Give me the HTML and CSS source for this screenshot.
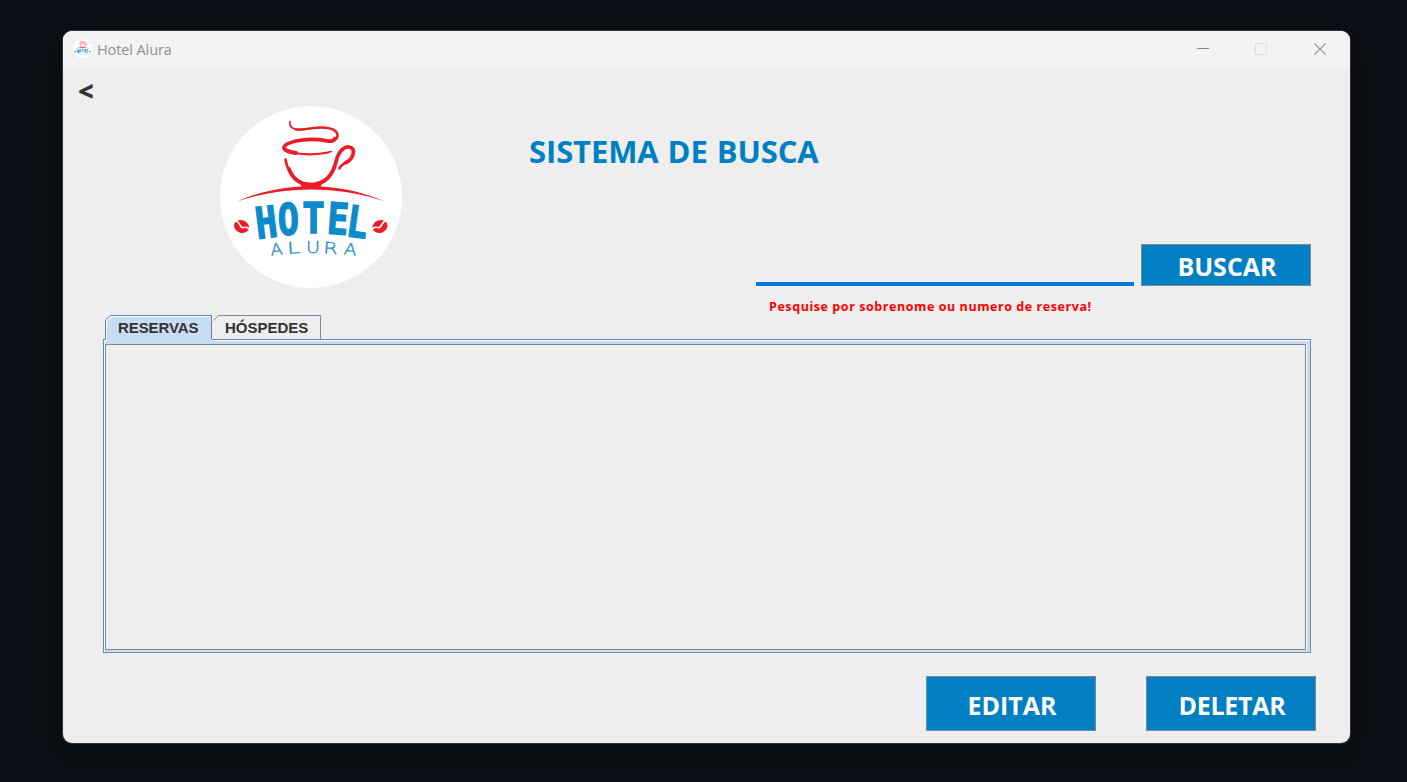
FILE: index.html
```html
<!DOCTYPE html>
<html lang="pt-BR">
<head>
<meta charset="utf-8">
<title>Hotel Alura</title>
<link rel="stylesheet" href="styles.css">
</head>
<body>
<main class="window">
  <header class="titlebar">
    <svg class="app-icon" viewBox="0 0 182 182"><use href="#logo"/></svg>
    <span class="app-name">Hotel Alura</span>
    <svg class="controls" viewBox="0 0 124 12">
      <path d="M0 5.5h12" stroke="#8b8b8b"/>
      <rect x="58.5" y=".5" width="11" height="11" rx="1" fill="none" stroke="#dedede"/>
      <path d="M117.3 .3l11.4 11.4M128.7 .3l-11.4 11.4" fill="none" stroke="#8b8b8b" stroke-width="1.1"/>
    </svg>
  </header>
  <section class="content">
    <div class="top">
      <div class="brand">
        <button class="back">&lt;</button>
        <svg class="logo" viewBox="0 0 182 182">
          <g id="logo">
            <circle cx="91" cy="91" r="91" fill="#fff"/>
            <g fill="none" stroke="#ed1c24" stroke-linecap="round" stroke-linejoin="round">
              <path d="M70 15.500C68.500 25 80 24.500 91 22.600" stroke-width="1.600"/>
              <path d="M76 23.500C84 24 92 21.500 102 21.500C112 21.500 118 25 117.500 30C117 34 113 35.500 109 35" stroke-width="2.500"/>
              <path d="M115 32.500C113 35.500 111 35.500 107 34.800C97 33 85 33 76 35C61 38.500 59 44.500 76 47" stroke-width="3.800"/>
              <path d="M72 46C83 49.500 99 48.500 108 46.500" stroke-width="2.300"/>
              <path d="M104 47.300L111.500 45.500" stroke-width="1.300"/>
              <path d="M65.500 53.500C66.500 60 70 67 74 71.500" stroke-width="2.600"/>
              <path d="M69 63C73 73.500 81 78.500 91 78.500C108 78.500 114 65 116.500 54C119 44 125 40.500 129 41C137 42 133 53.500 126 56.500" stroke-width="3.700"/>
              <path d="M128 55.500C122 58 120.500 60 119.500 62.500" stroke-width="2.500"/>
            </g>
            <path d="M17 95.500C63 75 119 75 165 95.500C119 79.500 63 79.500 17 95.500Z" fill="#ed1c24"/>
            <path d="M80 77Q91 81.500 102 77L100 82H82Z" fill="#ed1c24"/>
            <g id="bean" transform="translate(21.500 120.500) rotate(20)">
              <ellipse rx="7.700" ry="6.300" fill="#ed1c24"/>
              <path d="M-8-3C-3-5-2 2 2 .500C4-1 6-2 8 0" fill="none" stroke="#fff" stroke-width="1.500"/>
            </g>
            <use href="#bean" transform="matrix(-1 0 0 1 181.500 0)"/>
            <g class="mark" font-size="43.500">
              <text transform="translate(37.200 133) rotate(-7) scale(.83 1)">H</text>
              <text transform="translate(58.300 129) rotate(-2) scale(.81 1)">O</text>
              <text transform="translate(82.200 127) scale(.86 1)">T</text>
              <text transform="translate(106.200 127.500) rotate(4) scale(.82 1)">E</text>
              <text transform="translate(125 129.700) rotate(8) scale(.81 1)">L</text>
            </g>
            <g class="submark" font-size="16">
              <text transform="translate(51 149.800) rotate(-7) scale(1.120 1)">A</text>
              <text transform="translate(67.500 147.800) rotate(-4) scale(1.450 1)">L</text>
              <text transform="translate(86 147.300) scale(1.200 1)">U</text>
              <text transform="translate(103 147.300) rotate(4) scale(1.300 1)">R</text>
              <text transform="translate(123.500 148.300) rotate(6) scale(1.150 1)">A</text>
            </g>
          </g>
        </svg>
      </div>
      <h1 class="title">SISTEMA DE BUSCA</h1>
      <div class="search">
        <input class="field" type="text" aria-label="Busca">
        <button class="btn btn-search">BUSCAR</button>
      </div>
      <p class="hint"><span>Pesquise por sobrenome ou numero de reserva!</span></p>
    </div>
    <nav class="tabs">
      <svg class="tab-lines" viewBox="0 0 218 26">
        <path d="M1 26V6L7 1H109V26Z" fill="#c8ddf2"/>
        <path d="M1.500 26V6L7 1.500H106" fill="none" stroke="#fff"/>
        <path d="M.500 24V5L5.500 .500H106.500V24" fill="none" stroke="#6382bf"/>
        <rect x="107" y="0" width="4" height="24" fill="#eee"/>
        <path d="M108.500 5.500L113.500 .500H215.500V24" fill="none" stroke="#7a8a99"/>
        <path d="M107 24.500H111" stroke="#6382bf"/>
        <path d="M107 25.500H111" stroke="#fff"/>
      </svg>
      <span class="tab tab-active">RESERVAS</span>
      <span class="tab tab-guests">HÓSPEDES</span>
    </nav>
    <div class="panel"><div class="panel-inner"></div></div>
    <div class="actions">
      <button class="btn">EDITAR</button>
      <button class="btn btn-delete">DELETAR</button>
    </div>
  </section>
</main>
</body>
</html>
```
FILE: styles.css
```css
* { box-sizing: border-box; }
body {
  margin: 0;
  height: 782px;
  padding: 31px 57px 0 63px;
  overflow: hidden;
  background: #0d1117;
  font-family: "Open Sans", "Noto Sans", sans-serif;
}
button { font-family: inherit; margin: 0; padding: 0; }
.window {
  height: 712px;
  border-radius: 9px;
  background: #eee;
  overflow: hidden;
  box-shadow: 0 0 0 1px #303235, 0 10px 28px 8px #0a0d10;
}
.titlebar {
  display: flex;
  align-items: center;
  height: 37px;
  padding: 0 24px 0 10px;
  background: #f3f3f3;
}
.app-icon { width: 19px; height: 19px; margin-top: -2px; }
.app-name {
  margin-left: 5px;
  color: #909090;
  font-size: 14.500px;
  line-height: 37px;
  letter-spacing: -.1px;
}
.controls { width: 124px; height: 12px; margin: -2px 5px 0 auto; overflow: visible; }
.content { padding: 0 39px 0 40px; }
.top {
  display: grid;
  grid-template-columns: 426px 227px 555px;
  grid-template-rows: 176px 43px 28px;
}
.brand { grid-row: 1 / 4; padding-top: 7px; }
.back {
  display: block;
  width: 20px;
  height: 31px;
  margin-left: -27px;
  border: 0;
  background: none;
  color: #333;
  font-size: 27px;
  font-weight: 800;
  line-height: 31px;
}
.logo { display: block; width: 182px; height: 182px; margin-left: 117px; }
.mark {
  fill: #0c8aca;
  stroke: #0c8aca;
  stroke-width: 1.400px;
  font-family: "DejaVu Sans Mono", monospace;
  font-weight: 700;
}
.submark {
  fill: #2b91c9;
  stroke: #2b91c9;
  stroke-width: .4px;
  font-family: "DejaVu Sans", sans-serif;
  font-weight: 200;
}
.title {
  grid-column: 2 / 4;
  margin: 61px 0 0;
  color: #0080c2;
  font-size: 31px;
  line-height: 44px;
  letter-spacing: -.1px;
  word-spacing: 1px;
  white-space: nowrap;
}
.search {
  grid-column: 3;
  display: flex;
  align-items: flex-start;
  justify-content: space-between;
}
.field {
  width: 378px;
  height: 42px;
  border: 0;
  border-bottom: 4px solid #0078d7;
  background: transparent;
}
.btn {
  width: 170px;
  height: 55px;
  padding: 2px 0 0 2px;
  border: 1px solid #7a8a99;
  background: #0080c2;
  color: #fff;
  font-size: 25px;
  font-weight: 700;
  line-height: 34px;
}
.btn-search { height: 42px; }
.btn-delete { letter-spacing: -.3px; }
.hint {
  grid-column: 3;
  margin: 10px 0 0 13px;
  color: #f00;
  font-size: 12.500px;
  font-weight: 700;
  line-height: 20px;
  letter-spacing: .57px;
  white-space: nowrap;
}
.tabs {
  display: grid;
  grid-template-columns: 109px 109px;
  height: 24px;
  margin-left: 2px;
}
.tab-lines {
  grid-area: 1 / 1 / 2 / 3;
  width: 218px;
  height: 26px;
  z-index: 1;
}
.tab {
  grid-row: 1;
  z-index: 2;
  padding-left: 11px;
  color: #333;
  font: 700 15px/25px "Liberation Sans", sans-serif;
}
.tab-active { grid-column: 1; padding-left: 13px; letter-spacing: -.1px; }
.tab-guests { grid-column: 2; }
.panel {
  height: 314px;
  padding: 4px 4px 2px 1px;
  border: 1px solid #6382bf;
  border-right-color: #7a8a99;
  border-bottom-color: #7a8a99;
  background: #c8ddf2;
  box-shadow: inset 1px 1px #fff;
}
.panel-inner {
  height: 100%;
  border: 1px solid #7a8a99;
  background: #eee;
  box-shadow: 1px 0 #fff;
}
.actions { display: flex; justify-content: flex-end; gap: 50px; margin: 23px -5px 0 0; }
```
